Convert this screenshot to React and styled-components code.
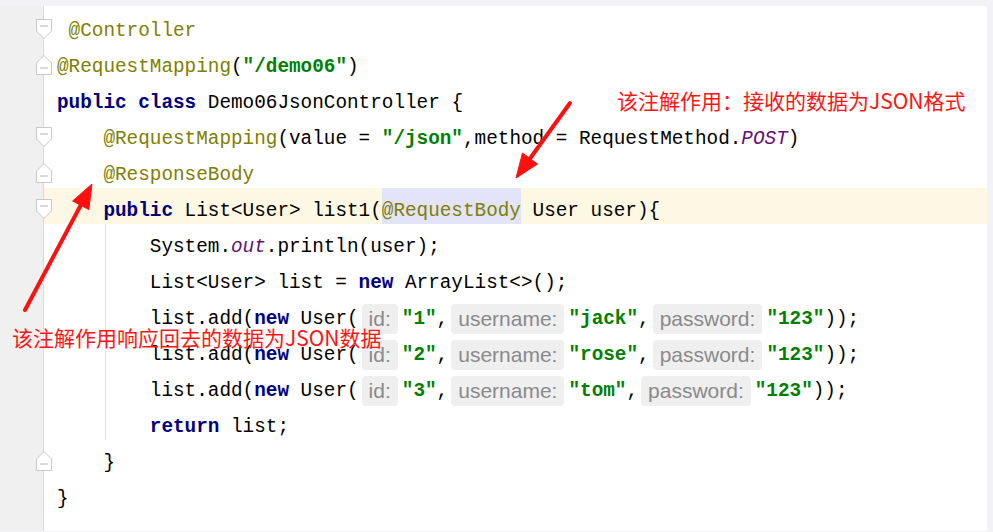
import React from 'react';
import styled, { createGlobalStyle } from 'styled-components';

const GlobalStyle = createGlobalStyle`
  html, body {
    margin: 0;
    padding: 0;
    background: #f2f2f7;
  }
  body {
    width: 993px;
    height: 532px;
    overflow: hidden;
  }
`

const Frame = styled.div`
  position: relative;
  width: 993px;
  height: 532px;
  padding: 6px 6px 1px 0;
  box-sizing: border-box;
  background: #f2f2f7;
`
const Editor = styled.div`
  display: flex;
  flex-direction: column;
  height: 100%;
  padding-top: 2px;
  box-sizing: border-box;
  background: linear-gradient(to right, #f0f0f0 0 43px, #d9d9d9 43px 44px, #ffffff 44px);
`
const Block = styled.div`
  display: flex;
  flex-direction: column;
  background: linear-gradient(#e4e4e4, #e4e4e4) 105px 0 / 1px 100% no-repeat;
`
const Row = styled.div`
  display: flex;
  height: 36px;
  flex-shrink: 0;
`
const GutterCell = styled.div`
  position: relative;
  width: 44px;
  flex-shrink: 0;
`
const Fold = styled.svg`
  position: absolute;
  left: 35px;
  top: 10px;
  width: 18px;
  height: 22px;
`
const Code = styled.div`
  flex: 1;
  padding-left: 13px;
  padding-top: 5px;
  font-family: "Liberation Mono", "DejaVu Sans Mono", monospace;
  font-size: 19.33px;
  line-height: 36px;
  white-space: pre;
  color: #000;
  background: ${p => (p.$current ? '#fdf8e3' : 'transparent')};
`
const Ann = styled.span`
  color: #808000;
`
const Marked = styled(Ann)`
  display: inline-block;
  height: 36px;
  margin-top: -5px;
  vertical-align: top;
  line-height: 46px;
  overflow: hidden;
  background: #e3e3fa;
`
const Kw = styled.span`
  color: #000080;
  font-weight: bold;
`
const Str = styled.span`
  color: #008000;
  font-weight: bold;
`
const Static = styled.span`
  color: #660e7a;
  font-style: italic;
`
const Hint = styled.span`
  display: inline-block;
  height: 30px;
  line-height: 30px;
  padding: 0 7px;
  margin: 0 4px 0 3px;
  border-radius: 4px;
  background: #efefef;
  color: #8a8a8a;
  font-family: "Liberation Sans", Arial, sans-serif;
  font-size: 21px;
  vertical-align: middle;
`
const Note = styled.div`
  position: absolute;
  left: ${p => p.$x}px;
  top: ${p => p.$y}px;
  font-family: "Noto Sans CJK SC", "Noto Sans", sans-serif;
  font-size: 21px;
  line-height: 24px;
  color: #ff1414;
  white-space: nowrap;
`
const Overlay = styled.svg`
  position: absolute;
  left: 0;
  top: 0;
  width: 993px;
  height: 532px;
  pointer-events: none;
`

function FoldMark({ dir }) {
  return (
    <Fold viewBox="0 0 18 22">
      {dir === 'down' ? (
        <path d="M1.5 1.5H16.5V13L9 20.5L1.5 13Z" fill="#fff" stroke="#c9c9c9" />
      ) : (
        <path d="M9 1.5L16.5 9V20.5H1.5V9Z" fill="#fff" stroke="#c9c9c9" />
      )}
      <path d={dir === 'down' ? 'M5 8H13' : 'M5 14H13'} stroke="#b5b5b5" />
    </Fold>
  )
}

function Line({ fold, current, children }) {
  return (
    <Row>
      <GutterCell>{fold ? <FoldMark dir={fold} /> : null}</GutterCell>
      <Code $current={current}>{children}</Code>
    </Row>
  )
}

function UserCall({ id, name }) {
  return (
    <Line>
      {'        list.add('}<Kw>new</Kw>{' User('}
      <Hint>id:</Hint><Str>"{id}"</Str>,
      <Hint>username:</Hint><Str>"{name}"</Str>,
      <Hint>password:</Hint><Str>"123"</Str>{'));'}
    </Line>
  )
}

function Arrow({ tail, tip, base, left, right }) {
  return (
    <g fill="#ff1010" stroke="#ff1010">
      <line x1={tail[0]} y1={tail[1]} x2={base[0]} y2={base[1]} strokeWidth="4" strokeLinecap="round" />
      <polygon points={`${tip.join(',')} ${left.join(',')} ${right.join(',')}`} strokeWidth="1" strokeLinejoin="round" />
    </g>
  )
}

export default function App() {
  return (
    <Frame>
      <GlobalStyle />
      <Editor>
        <Line fold="down">{' '}<Ann>@Controller</Ann></Line>
        <Line fold="up"><Ann>@RequestMapping</Ann>(<Str>"/demo06"</Str>)</Line>
        <Line><Kw>public</Kw> <Kw>class</Kw>{' Demo06JsonController {'}</Line>
        <Line fold="down">
          {'    '}<Ann>@RequestMapping</Ann>{'(value = '}<Str>"/json"</Str>{',method = RequestMethod.'}<Static>POST</Static>)
        </Line>
        <Line fold="up">{'    '}<Ann>@ResponseBody</Ann></Line>
        <Line fold="down" current>
          {'    '}<Kw>public</Kw>{' List<User> list1('}<Marked>@RequestBody</Marked>{' User user){'}
        </Line>
        <Block>
          <Line>{'        System.'}<Static>out</Static>{'.println(user);'}</Line>
          <Line>{'        List<User> list = '}<Kw>new</Kw>{' ArrayList<>();'}</Line>
          <UserCall id="1" name="jack" />
          <UserCall id="2" name="rose" />
          <UserCall id="3" name="tom" />
          <Line>{'        '}<Kw>return</Kw>{' list;'}</Line>
        </Block>
        <Line fold="up">{'    }'}</Line>
        <Line>{'}'}</Line>
      </Editor>

      <Overlay viewBox="0 0 993 532">
        <Arrow tail={[570, 103]} tip={[516, 178]} base={[530, 158.5]} left={[537.5, 164]} right={[522.5, 153]} />
        <Arrow tail={[25, 310]} tip={[92, 184]} base={[80.7, 205.2]} left={[88.8, 209.5]} right={[72.6, 201]} />
      </Overlay>
      <Note $x={617} $y={88}>该注解作用：接收的数据为JSON格式</Note>
      <Note $x={12} $y={325}>该注解作用响应回去的数据为JSON数据</Note>
    </Frame>
  )
}
